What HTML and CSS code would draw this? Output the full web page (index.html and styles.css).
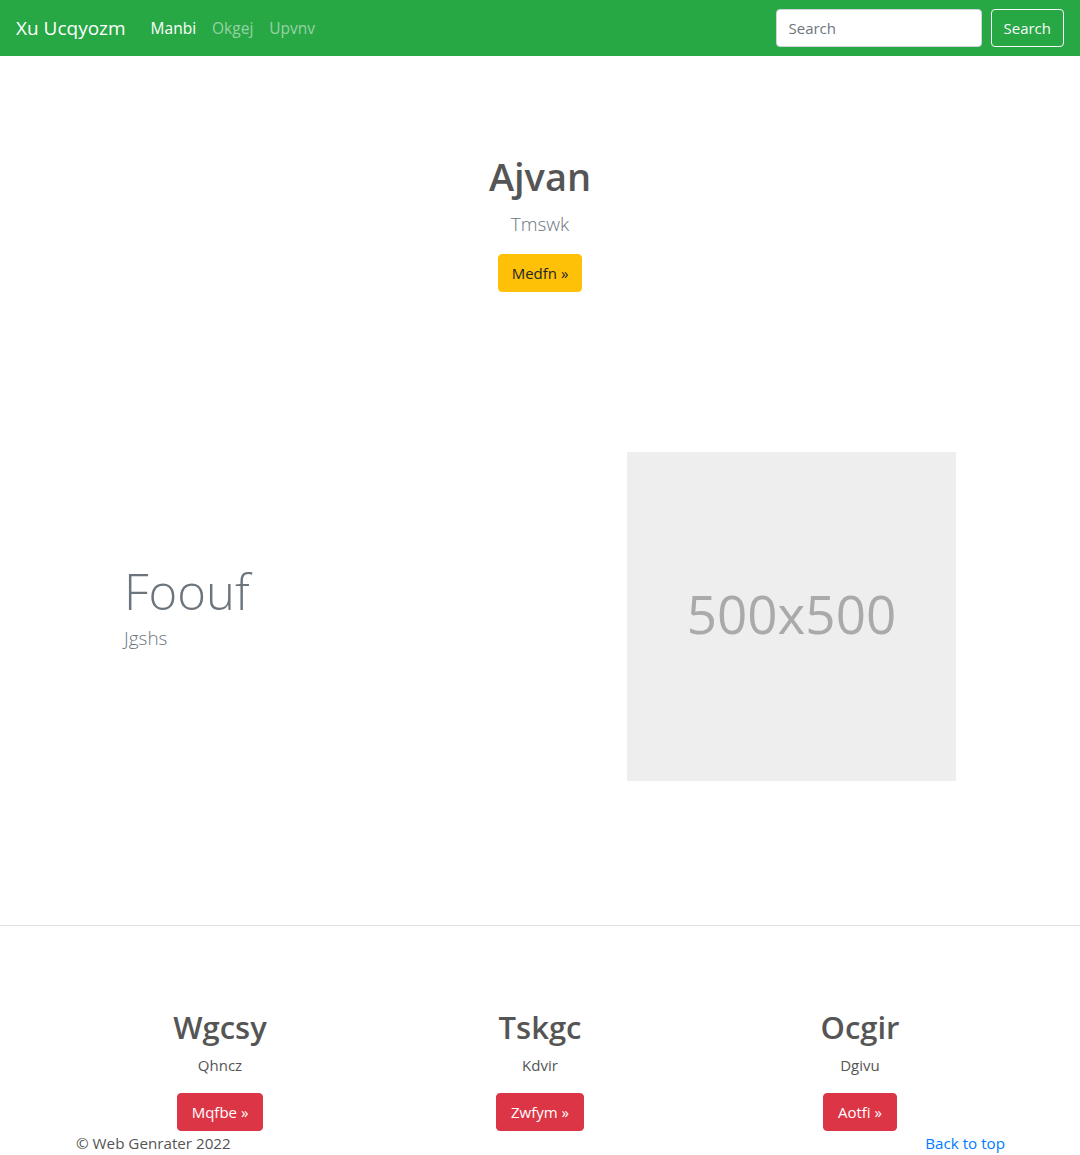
FILE: index.html
```html
<!DOCTYPE html>
<html lang="en">
<head>
<meta charset="utf-8">
<title>Xu Ucqyozm</title>
<link rel="stylesheet" href="styles.css">
</head>
<body>
<nav class="navbar">
  <a class="brand" href="#">Xu Ucqyozm</a>
  <ul class="nav">
    <li><a class="nav-link active" href="#">Manbi</a></li>
    <li><a class="nav-link" href="#">Okgej</a></li>
    <li><a class="nav-link" href="#">Upvnv</a></li>
  </ul>
  <form class="search">
    <input class="search-input" type="text" placeholder="Search">
    <button class="btn btn-outline-light" type="button">Search</button>
  </form>
</nav>

<section class="hero">
  <h1 class="hero-title">Ajvan</h1>
  <p class="lead hero-lead">Tmswk</p>
  <a class="btn btn-warning" href="#">Medfn »</a>
</section>

<section class="featurette">
  <div class="feat-text">
    <h2 class="display">Foouf</h2>
    <p class="lead feat-lead">Jgshs</p>
  </div>
  <div class="feat-media">
    <div class="placeholder">500x500</div>
  </div>
</section>

<hr class="divider">

<section class="cols">
  <div class="col">
    <h2 class="col-title">Wgcsy</h2>
    <p class="col-text">Qhncz</p>
    <a class="btn btn-danger" href="#">Mqfbe »</a>
  </div>
  <div class="col">
    <h2 class="col-title">Tskgc</h2>
    <p class="col-text">Kdvir</p>
    <a class="btn btn-danger" href="#">Zwfym »</a>
  </div>
  <div class="col">
    <h2 class="col-title">Ocgir</h2>
    <p class="col-text">Dgivu</p>
    <a class="btn btn-danger" href="#">Aotfi »</a>
  </div>
</section>

<footer class="footer">
  <p class="copy">© Web Genrater 2022</p>
  <a class="totop" href="#">Back to top</a>
</footer>
</body>
</html>
```

FILE: styles.css
```css
* { box-sizing: border-box; }
html, body { margin: 0; padding: 0; }
body {
  font-family: "Open Sans", "Noto Sans", sans-serif;
  font-size: 16px;
  line-height: 1.5;
  color: #212529;
  background: #fff;
  height: 1155px;
  overflow: hidden;
  position: relative;
}
a { text-decoration: none; }

.navbar {
  display: flex;
  align-items: center;
  height: 56px;
  padding: 0 16px;
  background: #28a745;
}
.brand {
  color: #fff;
  font-size: 19px;
  line-height: 30px;
  margin-right: 17px;
}
.nav {
  display: flex;
  list-style: none;
  margin: 0;
  padding: 0;
  flex: 1;
}
.nav-link {
  display: block;
  padding: 9px 8px 7px;
  font-size: 15.5px;
  color: rgba(255,255,255,.5);
}
.nav-link.active { color: #fff; }
.search { display: flex; align-items: center; }
.search-input {
  width: 206px;
  height: 38px;
  margin-right: 9px;
  padding: 6px 12px;
  border: 1px solid #ced4da;
  border-radius: 4px;
  font-family: inherit;
  font-size: 15px;
  color: #495057;
  background: #fff;
}
.search-input::placeholder { color: #6c757d; }

.btn {
  display: inline-block;
  height: 38px;
  padding: 0 13px;
  line-height: 36px;
  font-family: inherit;
  font-size: 15px;
  border: 1px solid transparent;
  border-radius: 4px;
}
.btn-outline-light {
  background: transparent;
  color: #f8f9fa;
  border-color: #f8f9fa;
  padding: 0 12px;
}
.btn-warning { background: #ffc107; color: #212529; border-color: #ffc107; }
.btn-danger { background: #dc3545; color: #fff; border-color: #dc3545; padding: 0 14px; }

.hero {
  text-align: center;
  padding-top: 96px;
  height: 396px;
}
.hero-title {
  margin: 0 0 9px;
  font-size: 38px;
  font-weight: 600;
  line-height: 48px;
  color: #555;
}
.lead {
  font-size: 19px;
  font-weight: 300;
  line-height: 30px;
  color: #6c757d;
}
.hero-lead { margin: 0 0 15px; }

.featurette {
  display: flex;
  align-items: center;
  width: 960px;
  margin: 0 auto;
  height: 329px;
}
.feat-text {
  width: 480px;
  padding-left: 64px;
}
.display {
  margin: 0;
  font-size: 49px;
  font-weight: 300;
  line-height: 64px;
  color: #6c757d;
}
.feat-lead { margin: 0 0 22px; }
.feat-media {
  width: 480px;
  padding-left: 87px;
}
.placeholder {
  width: 329px;
  height: 329px;
  padding-bottom: 6px;
  background: #eee;
  color: #aaa;
  font-size: 53px;
  display: flex;
  align-items: center;
  justify-content: center;
}

.divider {
  margin: 144px 0 0;
  border: 0;
  border-top: 1px solid #e2e2e2;
}

.cols {
  display: flex;
  width: 960px;
  margin: 0 auto;
  padding-top: 82px;
}
.col {
  width: 320px;
  text-align: center;
}
.col-title {
  margin: 0 0 7px;
  font-size: 31px;
  font-weight: 600;
  line-height: 38px;
  color: #555;
}
.col-text {
  margin: 0 0 16px;
  font-size: 15px;
  line-height: 24px;
  color: #555;
}

.footer {
  position: absolute;
  left: 76px;
  right: 75px;
  bottom: 0;
  display: flex;
  justify-content: space-between;
  height: 24px;
}
.copy {
  margin: 0;
  color: #555;
  font-size: 15.2px;
  line-height: 24px;
}
.totop {
  color: #007bff;
  font-size: 15.2px;
  line-height: 24px;
}
```
